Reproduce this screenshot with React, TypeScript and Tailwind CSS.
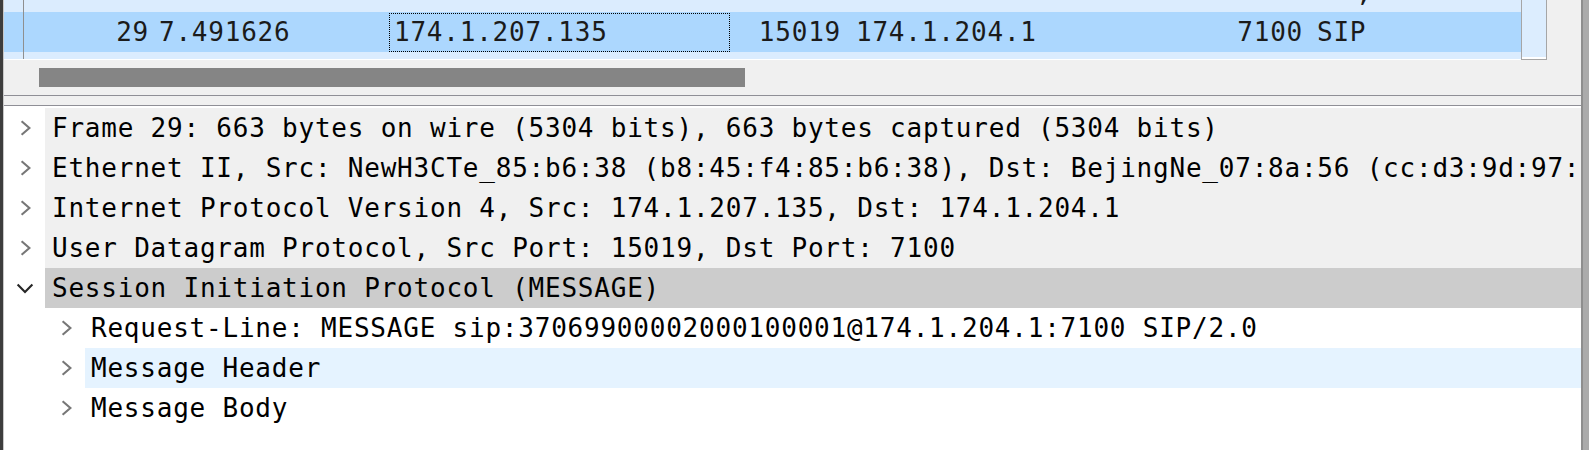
import React from "react";

const Right = () => (
  <svg width="12" height="16" viewBox="0 0 12 16" className="block shrink-0">
    <polyline points="1.6,1.2 9.4,8 1.6,14.8" fill="none" stroke="#777777" strokeWidth="2.1" />
  </svg>
);

const Down = () => (
  <svg width="18" height="11" viewBox="0 0 18 11" className="block shrink-0">
    <polyline points="1.6,1.6 9,9 16.4,1.6" fill="none" stroke="#262626" strokeWidth="2.1" />
  </svg>
);

const mono = "font-['DejaVu_Sans_Mono',monospace] text-[26px] tracking-[0.78px] leading-none";

function TopRow({ text }: { text: string }) {
  return (
    <div className="flex h-[40px] shrink-0">
      <div className="w-[41px] bg-white flex items-center pl-[16px]">
        <Right />
      </div>
      <div className="flex-1 flex items-center pl-[7px] whitespace-nowrap overflow-hidden text-black bg-[#f0f0f0]">
        {text}
      </div>
    </div>
  );
}

function SelTopRow({ text }: { text: string }) {
  return (
    <div className="flex h-[40px] shrink-0">
      <div className="w-[41px] bg-white flex items-center pl-[12px]">
        <Down />
      </div>
      <div className="flex-1 flex items-center pl-[7px] whitespace-nowrap overflow-hidden text-black bg-[#cccccc]">
        {text}
      </div>
    </div>
  );
}

function ChildRow({ text, hl }: { text: string; hl?: boolean }) {
  return (
    <div className="flex h-[40px] shrink-0 bg-white">
      <div className="w-[81px] flex items-center pl-[57px]">
        <Right />
      </div>
      <div
        className={`flex-1 flex items-center pl-[6px] whitespace-nowrap overflow-hidden text-black ${
          hl ? "bg-[#e5f3ff]" : ""
        }`}
      >
        {text}
      </div>
    </div>
  );
}

export default function App() {
  return (
    <div className={`w-[1589px] h-[450px] flex overflow-hidden bg-white ${mono}`}>
      {/* left dark edge */}
      <div className="w-[3px] h-full bg-[#3d3d3d] shrink-0" />
      <div className="w-[1px] h-full bg-[#c8c8c8] shrink-0" />

      <div className="flex-1 flex flex-col min-w-0">
        {/* packet list pane */}
        <div className="h-[96px] shrink-0 bg-[#f0f0f0] border-b border-[#8f8f96] flex flex-col">
          <div className="flex h-[60px] shrink-0">
            <div className="w-[1517px] flex flex-col relative shrink-0">
              <div className="h-[12px] bg-[#dbecfe] overflow-hidden shrink-0">
                <div className="h-[40px] mt-[-28px] flex items-center pl-[1352px] text-[#1b1b1b]">,</div>
              </div>
              <div className="h-[40px] bg-[#acd7fe] flex items-center text-[#1b1b1b] whitespace-nowrap shrink-0">
                <div className="w-[19px] shrink-0" />
                <div className="w-[131px] shrink-0 text-right pr-[5px]">29</div>
                <div className="w-[235px] shrink-0 pl-[5px]">7.491626</div>
                <div className="w-[341px] h-[39px] shrink-0 pl-[4px] border border-dotted border-black flex items-center">
                  174.1.207.135
                </div>
                <div className="w-[116px] shrink-0 text-right pr-[5px]">15019</div>
                <div className="w-[344px] shrink-0 pl-[10px]">174.1.204.1</div>
                <div className="w-[118px] shrink-0 text-right pr-[5px]">7100</div>
                <div className="shrink-0 pl-[9px]">SIP</div>
              </div>
              <div className="h-[7px] bg-[#dbecfe] shrink-0" />
              <div className="h-[1px] bg-white shrink-0" />
              <div className="absolute left-[19px] top-0 w-[1px] h-[59px] bg-[#8f8f8f]" />
            </div>
            <div className="w-[26px] h-[60px] shrink-0 bg-[#dcedfe] border-x border-b border-[#a6a6a6] flex flex-col justify-end">
              <div className="h-[2px] bg-white" />
            </div>
          </div>
          <div className="flex-1 pl-[35px] pt-[8px]">
            <div className="w-[706px] h-[19px] bg-[#858585]" />
          </div>
        </div>

        {/* splitter */}
        <div className="h-[10px] shrink-0 bg-[#f0f0f0] border-b border-[#8f8f96]" />

        {/* detail pane */}
        <div className="flex-1 flex flex-col bg-white pt-[2px] overflow-hidden">
          <TopRow text="Frame 29: 663 bytes on wire (5304 bits), 663 bytes captured (5304 bits)" />
          <TopRow text="Ethernet II, Src: NewH3CTe_85:b6:38 (b8:45:f4:85:b6:38), Dst: BejingNe_07:8a:56 (cc:d3:9d:97:8a:56)" />
          <TopRow text="Internet Protocol Version 4, Src: 174.1.207.135, Dst: 174.1.204.1" />
          <TopRow text="User Datagram Protocol, Src Port: 15019, Dst Port: 7100" />
          <SelTopRow text="Session Initiation Protocol (MESSAGE)" />
          <ChildRow text="Request-Line: MESSAGE sip:37069900002000100001@174.1.204.1:7100 SIP/2.0" />
          <ChildRow text="Message Header" hl />
          <ChildRow text="Message Body" />
        </div>
      </div>

      {/* right edge */}
      <div className="w-[2px] h-full bg-[#8e8e8e] shrink-0" />
      <div className="w-[6px] h-full bg-[#ababab] shrink-0" />
    </div>
  );
}
